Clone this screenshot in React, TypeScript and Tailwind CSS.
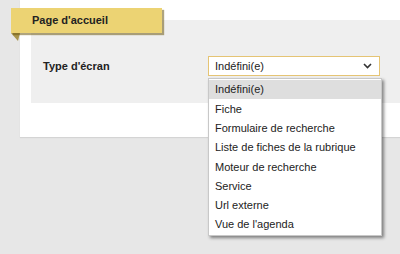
const options = [
  "Indéfini(e)",
  "Fiche",
  "Formulaire de recherche",
  "Liste de fiches de la rubrique",
  "Moteur de recherche",
  "Service",
  "Url externe",
  "Vue de l'agenda",
];

export default function App() {
  return (
    <div
      className="w-[400px] h-[254px] bg-[#e7e7e7] pl-[20px] overflow-hidden"
      style={{ fontFamily: '"Liberation Sans", Arial, sans-serif' }}
    >
      <div className="relative h-[137px] bg-white pt-[20px] pl-[11px] shadow-[0_1px_1px_rgba(0,0,0,0.08)]">
        {/* onglet jaune */}
        <div className="absolute left-[-9px] top-[8px] w-[151px] h-[25px] bg-[#ecd373] shadow-[2px_2px_1px_rgba(110,90,20,0.55)] flex items-center pl-[21px] z-10">
          <span className="text-[11px] font-bold text-[#222]">Page d'accueil</span>
        </div>
        <svg className="absolute left-[-9px] top-[33px]" width="9" height="8" viewBox="0 0 9 8">
          <polygon points="0,0 9,0 7,8" fill="#a8944c" />
        </svg>

        <div className="h-[83px] bg-[#efefef] pl-[12px] pt-[36px]">
          <div className="flex items-center h-[20px]">
            <span className="w-[165px] text-[11px] font-bold text-[#222]">Type d'écran</span>
            <div className="w-[172px] h-[20px] border border-[#e5c474] bg-white flex items-center justify-between pl-[6px] pr-[7px]">
              <span className="text-[11px] text-[#222]">Indéfini(e)</span>
              <svg width="9" height="6" viewBox="0 0 9 6">
                <path d="M1 1 L4.5 4.5 L8 1" stroke="#333" strokeWidth="1.6" fill="none" />
              </svg>
            </div>
          </div>
        </div>

        {/* liste déroulante */}
        <div className="absolute left-[188px] top-[78px] w-[174px] bg-white border border-[#c8c8c8] shadow-[2px_2px_3px_rgba(0,0,0,0.45)] py-[1px] z-20">
          {options.map((o, i) => (
            <div
              key={o}
              className={
                "h-[19.3px] flex items-center pl-[6px] text-[11px] text-[#222] " +
                (i === 0 ? "bg-[#dedede]" : "")
              }
            >
              {o}
            </div>
          ))}
        </div>
      </div>
    </div>
  );
}
